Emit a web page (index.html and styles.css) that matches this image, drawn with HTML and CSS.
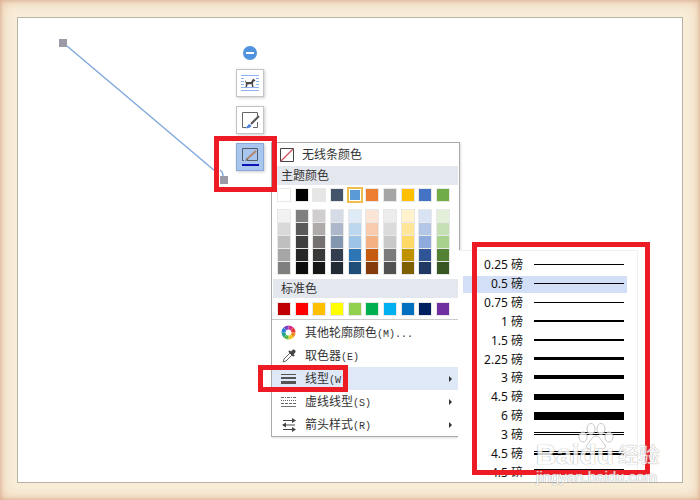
FILE: index.html
```
<!DOCTYPE html>
<html lang="zh-CN">
<head>
<meta charset="utf-8">
<title>线型</title>
<link rel="stylesheet" href="styles.css">
</head>
<body>
<main class="frame">
  <section class="paper" aria-label="画布"></section>

  <svg class="connector" width="180" height="160" viewBox="0 0 180 160" aria-hidden="true">
    <path d="M12 11 160 136M165 135q3 2 3 6" fill="none" stroke="#7fa8dc" stroke-width="1.400"/>
    <path d="M4 4h8v8H4zM165 141h8v8h-8z" fill="#9a9ba6"/>
  </svg>

  <div class="tools">
    <button class="collapse" aria-label="收起"><svg width="14" height="14" viewBox="0 0 14 14"><circle cx="7" cy="7" r="7" fill="#5093de"/><path d="M3 7h8" stroke="#fff" stroke-width="2"/></svg></button>
    <button class="tool" aria-label="布局选项"><svg width="20" height="20" viewBox="0 0 20 20"><path d="M1 2.500h18M1 5.500h18M1 8.500h3M16 8.500h3M1 11.500h3M16 11.500h3M1 14.500h18M1 17.500h18" stroke="#8fb2ec"/><path d="M4 5h12v9H4z" fill="#fff"/><path d="M5 7l1 2h5l1.500-2.500 1-1 .5 1 1.500.5-1 1.500h-1l-.5 2 .5 3.500h-1.500l-.5-3-4 .5-.5 2.500H5.500l.5-4L5 9z" fill="#4a4a4a"/></svg></button>
    <button class="tool" aria-label="形状填充"><svg width="20" height="20" viewBox="0 0 20 20"><path d="M6 17.500H2.500v-15h15V6M17.500 12v5.500H13" fill="none" stroke="#666"/><path d="M19 6l-8 8" stroke="#555" stroke-width="2"/><path d="M5 18c2 0 2-3 4.500-4l2 2c-1.500 2-4 2.500-6.500 2z" fill="#4a7fd6"/></svg></button>
    <button class="tool active" aria-label="形状轮廓"><svg width="20" height="20" viewBox="0 0 20 20"><path d="M4 13.500H2.500v-12h15v12H7" fill="none" stroke="#555b66"/><path d="M16 4l-9 8" stroke="#b5846a" stroke-width="2"/><path d="M7 11l-2 3 3-1z" fill="#666"/><path d="M2 18h17" stroke="#0a14b4" stroke-width="2"/></svg></button>
  </div>

  <nav class="menu" aria-label="轮廓">
    <button class="none"><svg width="14" height="14" viewBox="0 0 14 14"><path d="M.5.5h13v13H.5z" fill="#fff" stroke="#444"/><path d="M1 13 13 1" stroke="#d05060" stroke-width="1.300"/></svg>无线条颜色</button>
    <h2>主题颜色</h2>
    <div class="swatches theme" id="theme"></div>
    <div class="swatches tints" id="tints"></div>
    <h2>标准色</h2>
    <div class="swatches standard" id="standard"></div>
    <div class="items">
      <button><svg width="16" height="16" viewBox="0 0 16 16" fill="none" stroke-width="4"><g id="wheel"></g></svg><span>其他轮廓颜色<kbd>(M)...</kbd></span></button>
      <button><svg width="16" height="16" viewBox="0 0 16 16"><path d="M2 14l1-3 6-6 2 2-6 6z" fill="#fff" stroke="#666"/><path d="M8 3l5 5M10 5l3-3" stroke="#444" stroke-width="2"/><path d="M10 5l2-3q2-1 2.500 1t-3.500 4z" fill="#444"/></svg><span>取色器<kbd>(E)</kbd></span></button>
      <button class="selected"><svg width="16" height="16" viewBox="0 0 16 16"><path d="M0 3.500h15" stroke="#555"/><path d="M0 7h15" stroke="#555" stroke-width="2"/><path d="M0 11.500h15" stroke="#555" stroke-width="3"/></svg><span>线型<kbd>(W)</kbd></span><i></i></button>
      <button><svg width="16" height="16" viewBox="0 0 16 16"><path d="M0 3.500h15" stroke="#666" stroke-dasharray="3 1 1 1"/><path d="M0 6.500h15" stroke="#666" stroke-dasharray="1 1"/><path d="M0 9.500h15" stroke="#666" stroke-dasharray="3 1"/><path d="M0 12.500h15" stroke="#777"/></svg><span>虚线线型<kbd>(S)</kbd></span><i></i></button>
      <button><svg width="16" height="16" viewBox="0 0 16 16"><path d="M2 3.500h12M2 8h12M2 12.500h12" stroke="#444"/><path d="M11 1l4 2.500L11 6zM5 5.500 1 8l4 2.500zM11 10l4 2.500L11 15z" fill="#444"/></svg><span>箭头样式<kbd>(R)</kbd></span><i></i></button>
    </div>
  </nav>

  <div class="submenu" id="widths"></div>

  <div class="mark mark-tool"></div>
  <div class="mark mark-item"></div>
  <div class="mark mark-list"></div>

  <div class="watermark">
    <svg width="36" height="26" viewBox="0 0 36 26" aria-hidden="true"><g fill="#fff" stroke="#bbb"><ellipse cx="5" cy="14" rx="4" ry="5"/><ellipse cx="13" cy="6" rx="4" ry="5.500"/><ellipse cx="23" cy="6" rx="4" ry="5.500"/><ellipse cx="31" cy="14" rx="4" ry="5"/><path d="M18 13c4 0 6 6 9 9 1 2 0 4-2 4H11c-2 0-3-2-2-4 3-3 5-9 9-9z"/></g></svg>
    <div class="brand"><b>Baidu</b><span>经验</span></div>
    <div class="site">jingyan.baidu.com</div>
  </div>
</main>
<script src="app.js"></script>
</body>
</html>
```
FILE: styles.css
```
* { box-sizing: border-box; }
body {
  margin: 0;
  font: 12px/16px "Noto Sans", "Noto Sans CJK SC", sans-serif;
  color: #333;
}
button {
  border: 0;
  padding: 0;
  background: none;
  font: inherit;
  color: inherit;
  text-align: left;
}
svg { display: block; flex: none; }
.frame {
  position: relative;
  display: flex;
  min-height: 100vh;
  padding: 17px;
  overflow: hidden;
  background: #f8edd8;
  box-shadow: inset 0 0 4px #d4a588, inset 0 0 14px #e6bf9f;
}
.paper {
  flex: 1;
  background: #fff;
  border: 1px solid #b9b3a5;
}
.connector { position: absolute; left: 55px; top: 35px; }
.tools {
  position: absolute;
  left: 236px;
  top: 46px;
  display: flex;
  flex-direction: column;
  align-items: center;
  gap: 9px;
}
.tool {
  display: grid;
  place-items: center;
  width: 28px;
  height: 28px;
  background: #fff;
  border: 1px solid #c4c4c8;
  box-shadow: 1px 1px 3px #ccc;
}
.tool.active { background: #a9c6ee; border-color: #8ba9d6; }
.menu {
  position: absolute;
  left: 271px;
  top: 142px;
  width: 189px;
  border: 1px solid #aaa;
  background: #fff;
  box-shadow: 1px 1px 2px #ddd;
}
.none {
  display: flex;
  align-items: center;
  gap: 8px;
  width: 100%;
  height: 23px;
  padding-left: 8px;
}
h2 {
  margin: 0 1px;
  padding-left: 8px;
  font: inherit;
  line-height: 19px;
  background: #e4e7ed;
}
.swatches {
  display: grid;
  grid-template-columns: repeat(10, 12px);
  justify-content: space-between;
  padding: 0 10px 0 6px;
}
.swatches button { height: 12px; box-shadow: 0 0 0 1px #e8e8e8; }
.theme { margin: 4px 0 9px; }
.theme .current { outline: 2px solid #efbd4c; box-shadow: inset 0 0 0 1px #fff; }
.tints { row-gap: 1px; margin-bottom: 5px; }
.standard { margin: 5px 0 4px; }
.items { border-top: 1px solid #ccc; padding-top: 1px; }
.items button {
  display: flex;
  align-items: center;
  gap: 8px;
  width: 100%;
  height: 23px;
  padding: 0 7px 0 9px;
}
.items .selected { background: #dfe8f7; }
.items i {
  margin-left: auto;
  border: 3px solid transparent;
  border-left-color: #333;
  border-right: 0;
}
kbd { font: 10px "Liberation Mono", monospace; }
.submenu {
  position: absolute;
  left: 458px;
  top: 250px;
  display: grid;
  grid-template-rows: repeat(12, 1fr);
  align-items: center;
  width: 180px;
  height: 232px;
  padding: 5px 10px 0 5px;
  background: #fff;
  border-top: 1px solid #f0f0f0;
  border-right: 1px solid #f0f0f0;
  clip-path: inset(0 0 5px 0);
  color: #111;
}
.submenu button {
  display: grid;
  grid-template-columns: 60px 90px;
  column-gap: 11px;
  align-items: center;
  height: 17px;
}
.submenu span { text-align: right; }
.submenu .selected { background: #d3dff6; }
.mark { position: absolute; border: 5px solid #ed1c24; }
.mark-tool { left: 214px; top: 136px; width: 63px; height: 56px; }
.mark-item { left: 258px; top: 365px; width: 90px; height: 27px; }
.mark-list { left: 472px; top: 242px; width: 178px; height: 233px; }
.watermark {
  position: absolute;
  left: 536px;
  top: 423px;
  opacity: .8;
  color: #fff;
  font-family: "Liberation Sans", "Noto Sans CJK SC", sans-serif;
  text-shadow: 0 0 1px #999, 0 0 1px #999;
}
.watermark svg { margin-left: 42px; }
.brand {
  display: flex;
  gap: 4px;
  align-items: center;
  height: 24px;
  margin-top: -6px;
  font-size: 28px;
  line-height: 24px;
}
.brand span { font-size: 21px; }
.site { font-size: 15px; line-height: 20px; }
```
FILE: app.js
```
const theme = ['#ffffff', '#000000', '#e7e6e6', '#44546a', '#5b9bd5', '#ed7d31', '#a5a5a5', '#ffc000', '#4472c4', '#70ad47'];
const tints = [
  '#f2f2f2', '#7f7f7f', '#d0cece', '#d6dce5', '#deebf7', '#fbe5d6', '#ededed', '#fff2cc', '#dae3f3', '#e2f0d9',
  '#d9d9d9', '#595959', '#afabab', '#adb9ca', '#bdd7ee', '#f8cbad', '#dbdbdb', '#ffe699', '#b4c7e7', '#c5e0b4',
  '#bfbfbf', '#3f3f3f', '#767171', '#8497b0', '#9dc3e6', '#f4b183', '#c9c9c9', '#ffd966', '#8faadc', '#a9d18e',
  '#a6a6a6', '#262626', '#3b3838', '#333f50', '#2e75b6', '#c55a11', '#7b7b7b', '#bf9000', '#2f5597', '#548235',
  '#7f7f7f', '#0d0d0d', '#181717', '#222a35', '#1f4e79', '#843c0c', '#525252', '#7f6000', '#203864', '#385723'];
const standard = ['#c00000', '#ff0000', '#ffc000', '#ffff00', '#92d050', '#00b050', '#00b0f0', '#0070c0', '#002060', '#7030a0'];

function fill(id, colors) {
  document.getElementById(id).innerHTML = colors.map(c =>
    `<button style="background:${c}" aria-label="${c}"></button>`).join('');
}
fill('theme', theme);
fill('tints', tints);
fill('standard', standard);
document.getElementById('theme').children[4].classList.add('current');

const wheel = ['#d82a8c', '#e8343c', '#f08a24', '#f2c81e', '#5cb847', '#22a58a', '#2a7fd8', '#7a45c0'];
document.getElementById('wheel').innerHTML = wheel.map((c, i) =>
  `<path d="M7.500 2.500a5 5 0 0 1 3.500 1.400" stroke="${c}" transform="rotate(${i * 45} 7.500 7.500)"/>`).join('');

const widths = [
  ['0.25', [[6, 1]]], ['0.5', [[6, 1]]], ['0.75', [[6, 1]]], ['1', [[6, 2]]],
  ['1.5', [[6, 2]]], ['2.25', [[5, 3]]], ['3', [[4, 4]]], ['4.5', [[4, 6]]],
  ['6', [[3, 8]]], ['3', [[5, 1], [7, 1]]], ['4.5', [[5, 1], [7, 2]]], ['4.5', [[4, 3], [8, 1]]]];
document.getElementById('widths').innerHTML = widths.map(([label, bars], i) =>
  `<button class="${i === 1 ? 'selected' : ''}"><span>${label} 磅</span><svg width="90" height="15" viewBox="0 0 90 15" shape-rendering="crispEdges">` +
  bars.map(([y, h]) => `<rect y="${y}" width="90" height="${h}"/>`).join('') + '</svg></button>').join('');
```
